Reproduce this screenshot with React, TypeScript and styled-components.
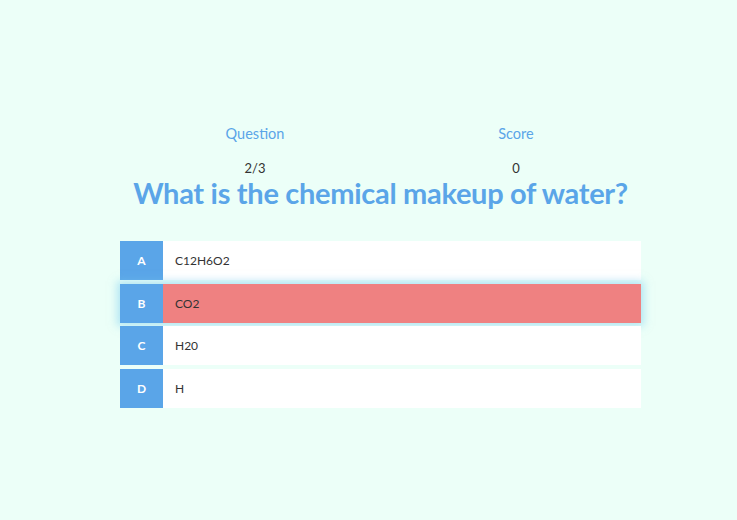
import React from 'react'
import styled, { createGlobalStyle } from 'styled-components'

const GlobalStyle = createGlobalStyle`
  html, body {
    margin: 0;
    padding: 0;
    background: #ecfff8;
    font-family: Lato, "Noto Sans", sans-serif;
  }
`

const Page = styled.div`
  width: 737px;
  height: 520px;
  display: flex;
  flex-direction: column;
  align-items: center;
  padding-top: 125px;
  padding-left: 24px;
  box-sizing: border-box;
`

const Stats = styled.div`
  display: flex;
  width: 522px;
  margin-left: 10px;
`

const Stat = styled.div`
  flex: 1;
  display: flex;
  flex-direction: column;
  align-items: center;
`

const StatLabel = styled.div`
  color: #5aa5e8;
  font-size: 14.5px;
  font-weight: 400;
  line-height: 18px;
`

const StatValue = styled.div`
  color: #333;
  font-size: 13px;
  line-height: 16px;
  margin-top: 17px;
`

const Title = styled.h1`
  margin: 0;
  color: #5aa5e8;
  font-size: 29px;
  font-weight: 700;
  letter-spacing: -0.3px;
  line-height: 34px;
`

const Answers = styled.div`
  margin-top: 31px;
  width: 521px;
  display: flex;
  flex-direction: column;
  gap: 3.7px;
`

const Answer = styled.div<{ $selected?: boolean }>`
  display: flex;
  height: 39px;
  background: ${props => (props.$selected ? '#ef8181' : '#ffffff')};
  box-shadow: ${props => (props.$selected ? '0 0 8px 3px rgba(120, 205, 240, 0.5)' : 'none')};
`

const Letter = styled.div`
  width: 43px;
  flex-shrink: 0;
  background: #5aa5e8;
  color: #fff;
  font-size: 12px;
  font-weight: 700;
  display: flex;
  align-items: center;
  justify-content: center;
`

const AnswerText = styled.div`
  display: flex;
  align-items: center;
  padding-left: 12px;
  font-size: 12px;
  color: #333;
`

const answers = [
  { letter: 'A', text: 'C12H6O2' },
  { letter: 'B', text: 'CO2', selected: true },
  { letter: 'C', text: 'H20' },
  { letter: 'D', text: 'H' },
]

export default function App() {
  return (
    <>
      <GlobalStyle />
      <Page>
        <Stats>
          <Stat>
            <StatLabel>Question</StatLabel>
            <StatValue>2/3</StatValue>
          </Stat>
          <Stat>
            <StatLabel>Score</StatLabel>
            <StatValue>0</StatValue>
          </Stat>
        </Stats>
        <Title>What is the chemical makeup of water?</Title>
        <Answers>
          {answers.map(a => (
            <Answer key={a.letter} $selected={a.selected}>
              <Letter>{a.letter}</Letter>
              <AnswerText>{a.text}</AnswerText>
            </Answer>
          ))}
        </Answers>
      </Page>
    </>
  )
}
